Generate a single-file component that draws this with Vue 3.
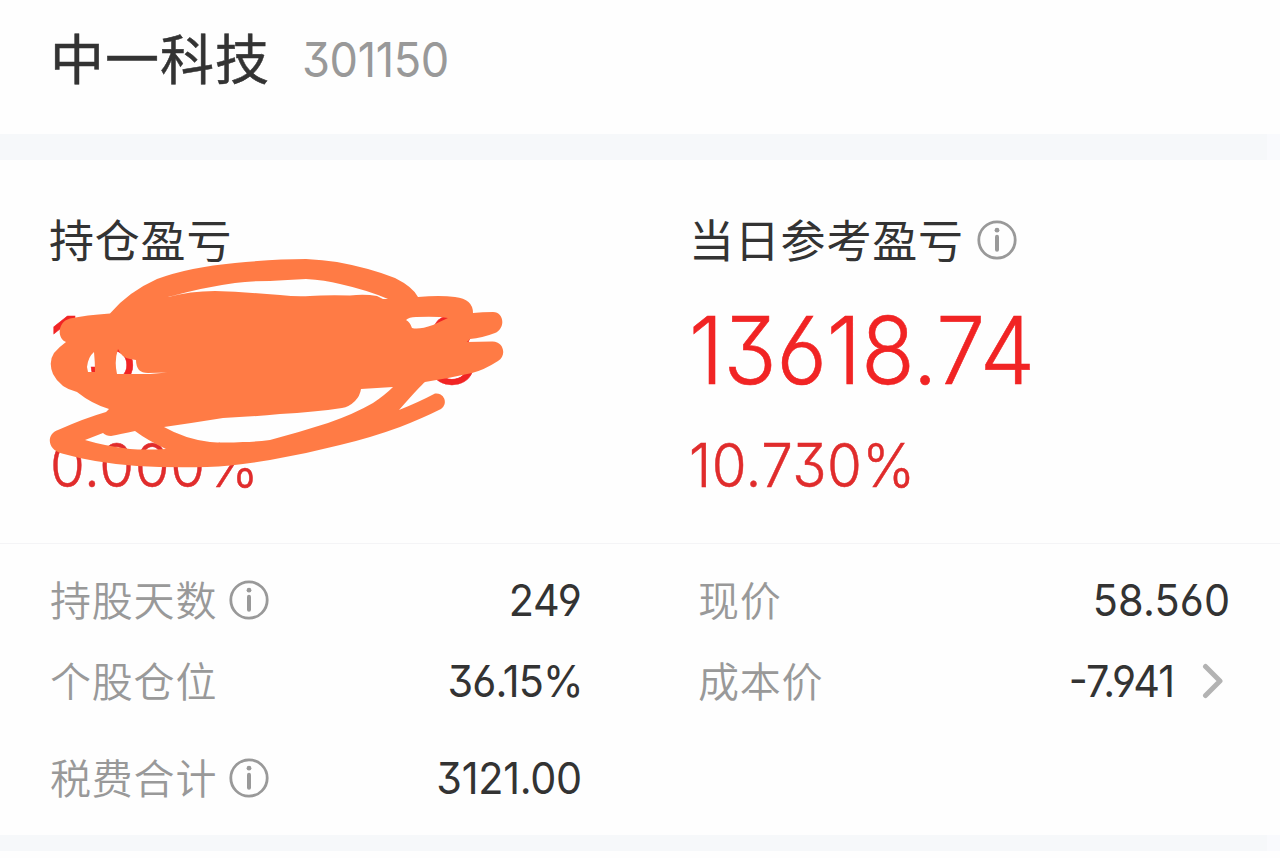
<template>
    <main class="page">
        <header class="stock-header">
            <h1 class="stock-name">中一科技</h1>
            <span class="stock-code num">301150</span>
        </header>

        <div class="band"></div>

        <section class="summary">
            <div class="summary-col">
                <h2 class="summary-label"><span>持仓盈亏</span></h2>
                <div class="amount amount-hidden num">
                    <span>13</span>
                    <span>8</span>
                </div>
                <div class="percent percent-zero num">0.000%</div>

                <svg class="scribble" viewBox="40 250 480 230" aria-hidden="true">
                    <path fill-rule="evenodd" :d="scribble" />
                </svg>
            </div>

            <div class="summary-col">
                <h2 class="summary-label">
                    <span>当日参考盈亏</span>
                    <svg class="info" viewBox="0 0 40 40">
                        <circle cx="20" cy="20" r="18.2" />
                        <circle class="dot" cx="20" cy="10.2" r="2.4" />
                        <path d="M20 16.8v13" />
                    </svg>
                </h2>
                <div class="amount num">13618.74</div>
                <div class="percent num">10.730%</div>
            </div>
        </section>

        <section class="details">
            <div
                v-for="item in details"
                :key="item.key"
                class="detail"
                :class="item.key"
            >
                <span class="detail-label">{{ item.label }}</span>
                <svg v-if="item.info" class="info" viewBox="0 0 40 40">
                    <circle cx="20" cy="20" r="18.2" />
                    <circle class="dot" cx="20" cy="10.2" r="2.4" />
                    <path d="M20 16.8v13" />
                </svg>
                <span class="detail-value num">{{ item.value }}</span>
                <svg v-if="item.link" class="chevron" viewBox="0 0 22 36">
                    <path d="M3.5 3.5 18 18 3.5 32.5" />
                </svg>
            </div>
        </section>

        <div class="band band-bottom"></div>
    </main>
</template>

<script setup>
const details = [
    { key: "days", label: "持股天数", value: "249", info: true },
    { key: "price", label: "现价", value: "58.560" },
    { key: "position", label: "个股仓位", value: "36.15%" },
    { key: "cost", label: "成本价", value: "-7.941", link: true },
    { key: "fees", label: "税费合计", value: "3121.00", info: true },
]

// outer contour first, then the gaps between the strokes
const scribble = [
    "M70 318.5 Q86 315 110 313.5 Q128 292 157 279 Q190 267 235 263 Q275 259 306 259 Q323 260 337 262 Q370 268 395 278 Q413 287 418 297 Q440 295 455 297 Q473 299 473 313 Q482 312 493 312 C504 312 506 328 495 333 Q482 338 470 339 L467 342 L492 341.5 C504 341 507 356 498 361 Q484 370 472 373 Q450 378 425 382 Q421 385 399 410 Q419 402 435 393.5 A8.5 8.5 0 0 1 441 409 Q423 418 400 427 Q370 438 340 445 Q305 454 270 460 Q235 466 207 467 Q170 468 137 466 Q95 463 62 453.5 C47 450 46 434 58 430 Q85 418 106 412 L109 409 Q92 404 77 392 Q60 388 53 374 Q48 362 54 353 Q59 347 66 342 C57 339 57 322 70 318.5Z",
    "M168 297 Q190 291 215 291 Q245 292 280 295 Q297 297 310 296 Q325 295 350 295.5 Q365 294 377 296 L383 299 L388 299 Q367 290 340 284 Q325 280 306 279 Q287 280 270 281 Q250 281 235 283 Q205 287 168 297Z",
    "M87 367 Q88 357 94 352 Q95 362 95 372 L88 372Z",
    "M118 349 Q122 358 130 359 L136 360 Q136 366 139 370 Q142 373 148 373 L167 372.5 L150 374 L117 374 Q114 361 118 349Z",
    "M406 320 Q409 317 416 317 Q437 316 448 318 L433 325 Q419 330 412 328 Q410 322 406 320Z",
    "M361 389 L393 387 Q385 395 373 403 Q354 414 328 423 Q300 432 270 440 Q255 442 243 442 Q224 443 210 442 Q185 439 164 427 Q192 423 223 418 Q250 417 280 414 Q315 412 342 408 Q349 407 355 401 Q360 396 361 389Z",
    "M85 440 L103 433 Q106 436 111 436 Q121 434 135 431 Q147 440 166 449 Q145 450 130 449 Q105 446 85 440Z",
].join(" ")
</script>

<style>
body {
    background: #fefefe;
}
</style>

<style scoped>
.page {
    width: 1280px;
    height: 858px;
    overflow: hidden;

    color: #333;
    background: #fefefe;
    font-family: "Noto Sans CJK SC", sans-serif;
}

/* slightly condensed figures with flat 3 and open 6/9 */
.num {
    font-family: Inter, sans-serif;
    font-feature-settings: "cv03", "cv04", "cv09", "case";
    white-space: nowrap;
    transform: scaleX(0.94);
    transform-origin: left center;
}

.stock-header {
    display: flex;
    height: 134px;
    padding: 0 49px 16px;
    box-sizing: border-box;
    align-items: center;
}

.stock-name {
    width: 252px;
    margin: -5px 0 0 1px;
    font-size: 54px;
    font-weight: 400;
    letter-spacing: 1px;
    line-height: 80px;
    -webkit-text-stroke: 0.5px #333;
}

.stock-code {
    color: #999;
    font-size: 48px;
    letter-spacing: -0.4px;
}

.band {
    height: 26px;
    background: linear-gradient(90deg, #f6f8fa 1267px, #f9fafd 1267px);
}

.band-bottom {
    height: 16px;
}

.summary {
    display: grid;
    grid-template-columns: 640px 640px;
    height: 383px;
}

.summary-col {
    position: relative;
    padding: 50px 0 0 50px;
}

.summary-label {
    display: flex;
    height: 60px;
    margin: 0;
    align-items: center;
    gap: 13px;

    font-size: 45px;
    font-weight: 400;
    letter-spacing: 0.8px;
    line-height: 60px;
}

.summary-label span {
    margin: -2px 0 0 -1px;
}

.amount {
    height: 100px;
    margin: 30px 0 0 -1px;

    color: #f12424;
    font-size: 93px;
    font-weight: 350;
    line-height: 100px;
    -webkit-text-stroke: 0.6px #f12424;
}

.amount-hidden {
    display: flex;
    width: 459px;
    justify-content: space-between;
    letter-spacing: 2px;
}

.percent {
    height: 70px;
    margin: 30px 0 0 -1px;

    color: #e02c2c;
    font-size: 60px;
    font-weight: 350;
    letter-spacing: 0.5px;
    line-height: 70px;
    -webkit-text-stroke: 0.5px #e02c2c;
}

.percent-zero {
    margin-left: 0;
    letter-spacing: 0.7px;
}

.scribble {
    position: absolute;
    top: 90px;
    left: 40px;
    width: 480px;
    height: 230px;
    fill: #ff7b45;
}

.info {
    width: 40px;
    height: 40px;
    flex-shrink: 0;

    fill: none;
    stroke: #999;
    stroke-width: 2.8;
    stroke-linecap: round;
}

.info path {
    stroke-width: 4;
}

.info .dot {
    fill: #999;
    stroke: none;
}

.details {
    display: grid;
    grid-template-columns: 532px 532px;
    grid-template-rows: 81px 81px 113px;
    column-gap: 116px;
    height: 292px;
    padding: 15px 50px 0;
    box-sizing: border-box;
    border-top: 1px solid #f4f4f6;
}

.detail {
    display: flex;
    align-items: center;
}

.detail-label {
    margin: -3px 12px 0 0;

    color: #999;
    font-size: 41px;
    font-weight: 350;
    letter-spacing: 0.8px;
}

.detail-value {
    margin-left: auto;
    font-size: 44px;
    letter-spacing: -0.3px;
    transform-origin: right center;
}

.price .detail-value {
    letter-spacing: 0.2px;
}

.position .detail-value,
.cost .detail-value {
    margin-right: -1px;
    letter-spacing: -1px;
}

.chevron {
    width: 22px;
    height: 36px;
    margin: 0 6px 0 29px;

    fill: none;
    stroke: #b3b3b3;
    stroke-width: 5;
    stroke-linecap: round;
    stroke-linejoin: round;
}
</style>
